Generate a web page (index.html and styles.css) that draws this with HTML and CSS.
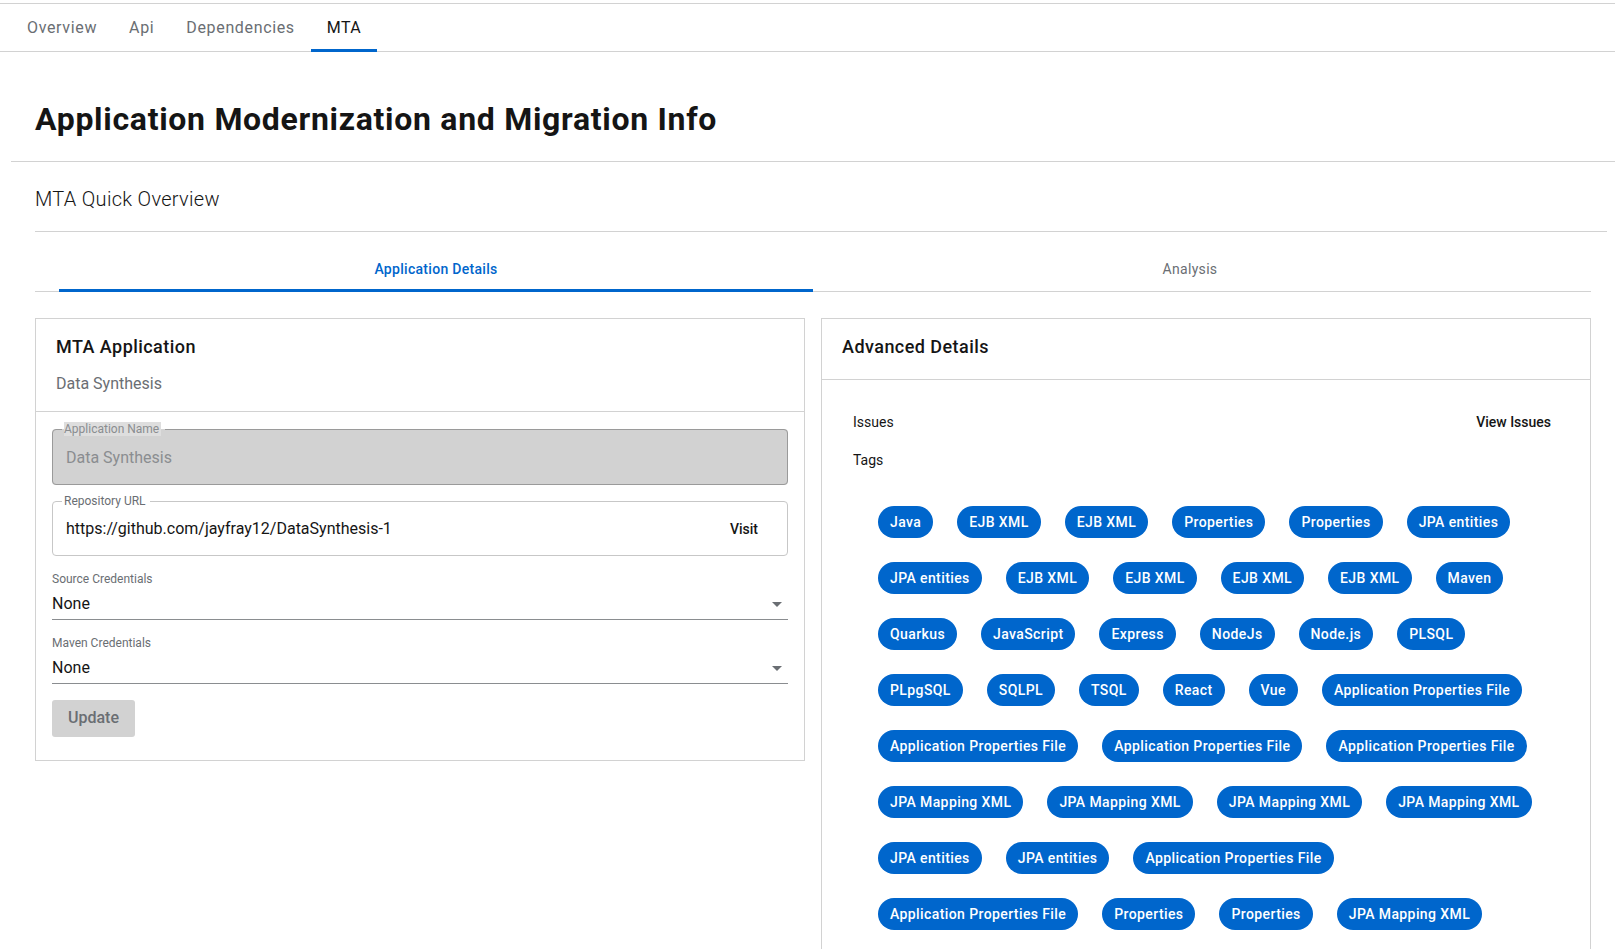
FILE: index.html
```html
<!DOCTYPE html>
<html lang="en">
<head>
<meta charset="utf-8">
<title>MTA</title>
<link rel="stylesheet" href="styles.css">
</head>
<body>
<div class="page">
  <nav class="top-tabs">
    <a class="top-tab">Overview</a>
    <a class="top-tab">Api</a>
    <a class="top-tab">Dependencies</a>
    <a class="top-tab active">MTA</a>
  </nav>
  <main class="content">
    <header class="page-head">
      <h1>Application Modernization and Migration Info</h1>
    </header>
    <section class="overview">
      <div class="overview-head">MTA Quick Overview</div>
      <div class="sub-tabs">
        <button class="sub-tab active">Application Details</button>
        <button class="sub-tab">Analysis</button>
      </div>
      <div class="cards">
        <div class="card">
          <div class="card-head app-head">
            <div class="card-title">MTA Application</div>
            <div class="card-sub">Data Synthesis</div>
          </div>
          <div class="form">
            <fieldset class="field field-disabled">
              <legend><span>Application Name</span></legend>
              <div class="field-value muted">Data Synthesis</div>
            </fieldset>
            <fieldset class="field field-url">
              <legend><span>Repository URL</span></legend>
              <div class="field-row">
                <div class="field-value">https://github.com/jayfray12/DataSynthesis-1</div>
                <button class="visit">Visit</button>
              </div>
            </fieldset>
            <div class="select-group">
              <div class="select-label">Source Credentials</div>
              <div class="select">
                <span>None</span>
                <svg class="caret" width="10" height="5" viewBox="0 0 10 5"><path d="M0 0h10L5 5z"/></svg>
              </div>
            </div>
            <div class="select-group">
              <div class="select-label">Maven Credentials</div>
              <div class="select">
                <span>None</span>
                <svg class="caret" width="10" height="5" viewBox="0 0 10 5"><path d="M0 0h10L5 5z"/></svg>
              </div>
            </div>
            <button class="update">Update</button>
          </div>
        </div>
        <div class="card">
          <div class="card-head adv-head">
            <div class="card-title">Advanced Details</div>
          </div>
          <div class="adv-body">
            <div class="adv-row">
              <span>Issues</span>
              <span class="view-issues">View Issues</span>
            </div>
            <div class="adv-row tags-label">Tags</div>
            <div class="chips">
              <span class="chip">Java</span>
              <span class="chip">EJB XML</span>
              <span class="chip">EJB XML</span>
              <span class="chip">Properties</span>
              <span class="chip">Properties</span>
              <span class="chip">JPA entities</span>
              <span class="chip">JPA entities</span>
              <span class="chip">EJB XML</span>
              <span class="chip">EJB XML</span>
              <span class="chip">EJB XML</span>
              <span class="chip">EJB XML</span>
              <span class="chip">Maven</span>
              <span class="chip">Quarkus</span>
              <span class="chip">JavaScript</span>
              <span class="chip">Express</span>
              <span class="chip">NodeJs</span>
              <span class="chip">Node.js</span>
              <span class="chip">PLSQL</span>
              <span class="chip">PLpgSQL</span>
              <span class="chip">SQLPL</span>
              <span class="chip">TSQL</span>
              <span class="chip">React</span>
              <span class="chip">Vue</span>
              <span class="chip">Application Properties File</span>
              <span class="chip">Application Properties File</span>
              <span class="chip">Application Properties File</span>
              <span class="chip">Application Properties File</span>
              <span class="chip">JPA Mapping XML</span>
              <span class="chip">JPA Mapping XML</span>
              <span class="chip">JPA Mapping XML</span>
              <span class="chip">JPA Mapping XML</span>
              <span class="chip">JPA entities</span>
              <span class="chip">JPA entities</span>
              <span class="chip">Application Properties File</span>
              <span class="chip">Application Properties File</span>
              <span class="chip">Properties</span>
              <span class="chip">Properties</span>
              <span class="chip">JPA Mapping XML</span>
            </div>
          </div>
        </div>
      </div>
    </section>
  </main>
</div>
</body>
</html>
```
FILE: styles.css
```css
* { box-sizing: border-box; }
html, body { margin: 0; padding: 0; background: #fff; }
body {
  font-family: Roboto, "Open Sans", "Liberation Sans", sans-serif;
  color: #151515;
  overflow: hidden;
}
button { font-family: inherit; }

.top-tabs {
  margin-top: 3px;
  border-top: 1px solid #d2d2d2;
  border-bottom: 1px solid #d2d2d2;
  height: 49px;
  display: flex;
  padding-left: 11px;
}
.top-tab {
  position: relative;
  display: flex;
  align-items: center;
  padding: 0 16px;
  font-size: 16px;
  letter-spacing: 0.65px;
  color: #6a6e73;
}
.top-tab.active { color: #151515; letter-spacing: 0.4px; }
.top-tab.active::after {
  content: "";
  position: absolute;
  left: 0; right: 0; bottom: -1px;
  height: 3px;
  background: #0066cc;
}

.content { padding-left: 11px; }

.page-head {
  padding: 47px 24px 22px;
  border-bottom: 1px solid #d2d2d2;
}
.page-head h1 {
  margin: 0;
  font-size: 32px;
  line-height: 40px;
  font-weight: 700;
  letter-spacing: 0.7px;
}

.overview { margin: 0 8px 0 24px; }
.overview-head {
  padding: 22px 0 17px;
  font-size: 20px;
  line-height: 30px;
  font-weight: 300;
  letter-spacing: 0.3px;
  border-bottom: 1px solid #d2d2d2;
}

.sub-tabs {
  margin: 22px 16px 0 0;
  padding: 0 24px;
  display: flex;
  border-bottom: 1px solid #d2d2d2;
}
.sub-tab {
  position: relative;
  flex: 1;
  border: 0;
  background: none;
  padding: 5px 0 11px;
  font-size: 14px;
  line-height: 21px;
  letter-spacing: 0.3px;
  color: #6a6e73;
}
.sub-tab.active { color: #0066cc; font-weight: 500; }
.sub-tab.active::after {
  content: "";
  position: absolute;
  left: 0; right: 0; bottom: -1px;
  height: 3px;
  background: #0066cc;
}

.cards {
  margin: 26px 16px 0 0;
  display: grid;
  grid-template-columns: 1fr 1fr;
  gap: 16px;
  align-items: start;
}
.card {
  border: 1px solid #d2d2d2;
  background: #fff;
}
.card-head { border-bottom: 1px solid #d2d2d2; }
.app-head { padding: 14px 20px 15px; }
.adv-head { padding: 14px 20px 19px; }
.card-title {
  font-size: 18px;
  line-height: 27px;
  font-weight: 500;
  letter-spacing: 0.45px;
}
.card-sub {
  margin-top: 12px;
  font-size: 16px;
  line-height: 24px;
  color: #6a6e73;
}

.form { padding: 10px 16px 23px; }
.field {
  margin: 0;
  padding: 0 13px 14px;
  border: 1px solid #c7c7c7;
  border-radius: 4px;
  min-width: 0;
}
.field legend {
  margin-left: -4px;
  padding: 0 4px 0 2px;
  font-size: 12px;
  line-height: 14px;
  color: #6a6e73;
}
.field-disabled {
  background: #d2d2d2;
  border-color: #9a9a9a;
}
.field-disabled legend span { background: #dedede; color: #8a8d90; padding-right: 2px; }
.field-disabled .field-value { margin-top: 10px; }
.field-url { margin-top: 9px; }
.field-row {
  margin-top: 9px;
  display: flex;
  align-items: center;
  justify-content: space-between;
}
.field-value {
  font-size: 16px;
  line-height: 24px;
  color: #151515;
}
.field-value.muted { color: #8a8d90; }
.visit {
  border: 0;
  background: none;
  padding: 0 16px;
  font-size: 14px;
  line-height: 24px;
  font-weight: 500;
  color: #151515;
}

.select-group { margin-top: 14px; }
.select-label {
  font-size: 12px;
  line-height: 18px;
  color: #6a6e73;
}
.select {
  margin-top: 4px;
  padding-bottom: 3px;
  border-bottom: 1px solid #8a8d90;
  display: flex;
  align-items: center;
  justify-content: space-between;
  font-size: 16px;
  line-height: 24px;
}
.caret { fill: #6a6e73; margin-right: 6px; }

.update {
  margin-top: 16px;
  border: 0;
  border-radius: 3px;
  background: #d2d2d2;
  color: #6a6e73;
  padding: 6px 16px 7px;
  font-size: 16px;
  line-height: 24px;
  font-weight: 500;
}

.adv-body { padding: 32px 39px 40px 31px; }
.adv-row {
  display: flex;
  justify-content: space-between;
  font-size: 14px;
  line-height: 21px;
}
.view-issues { font-weight: 500; }
.tags-label { margin-top: 17px; }
.chips {
  margin-top: 35px;
  padding-left: 25px;
  display: flex;
  flex-wrap: wrap;
  gap: 24px;
}
.chip {
  display: inline-block;
  height: 32px;
  line-height: 32px;
  padding: 0 12px;
  border-radius: 16px;
  background: #0066cc;
  color: #fff;
  font-size: 14px;
  font-weight: 500;
  letter-spacing: 0.4px;
  white-space: nowrap;
}
```
